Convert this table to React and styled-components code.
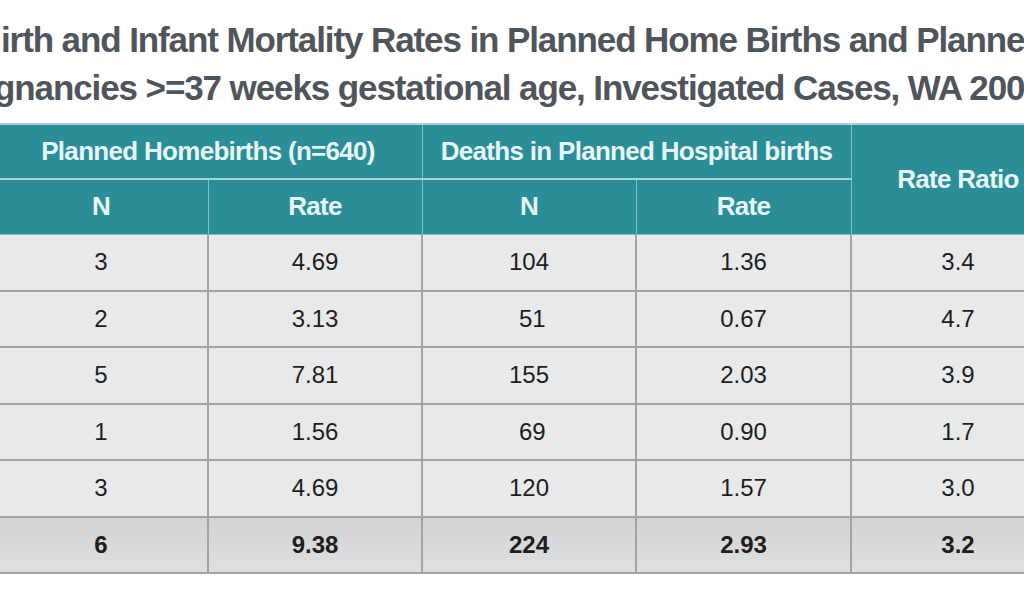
import React from "react";
import styled, { createGlobalStyle } from "styled-components";

const Global = createGlobalStyle`
  html, body { margin: 0; padding: 0; background: #ffffff; }
  body { width: 1024px; height: 600px; overflow: hidden; }
`;

const Page = styled.div`
  width: 1024px;
  height: 600px;
  overflow: hidden;
  background: #fff;
  display: flex;
  flex-direction: column;
`;

const Title = styled.div`
  padding-top: 16px;
  height: 123px;
  box-sizing: border-box;
  font-family: "Liberation Sans", Arial, sans-serif;
  font-weight: 700;
  font-size: 35px;
  letter-spacing: -1.1px;
  line-height: 48px;
  color: #50555b;
  white-space: nowrap;
  flex: none;
`;

const TitleLine = styled.div`
  margin-left: ${(p) => p.$offset || 0}px;
`;

const Table = styled.table`
  border-collapse: collapse;
  table-layout: fixed;
  width: 1071px;
  margin-left: -7px;
  flex: none;
`;

const HeadCell = styled.th`
  background: #2b8d98;
  color: #e6f5f5;
  font-family: "Liberation Sans", Arial, sans-serif;
  font-weight: 700;
  font-size: 26px;
  letter-spacing: -0.7px;
  height: 55px;
  padding: 0;
  text-align: center;
  vertical-align: middle;
  border: 1px solid #80bdc4;
  border-top: 2px solid #a4d2d7;
  box-sizing: border-box;
`;

const Cell = styled.td`
  background: ${(p) => (p.$total ? "linear-gradient(#d1d3d5, #dddfe1)" : "#e8e9eb")};
  color: #1e1e1e;
  font-family: "Liberation Sans", Arial, sans-serif;
  font-weight: ${(p) => (p.$total ? 700 : 400)};
  font-size: 24px;
  height: 56.5px;
  padding: 0;
  text-align: center;
  vertical-align: middle;
  white-space: pre;
  border: 2px solid #a2a3a5;
  border-top: ${(p) => (p.$first ? "none" : "2px solid #a2a3a5")};
  box-sizing: border-box;
`;

const rows = [
  ["3", "4.69", "104", "1.36", "3.4"],
  ["2", "3.13", " 51", "0.67", "4.7"],
  ["5", "7.81", "155", "2.03", "3.9"],
  ["1", "1.56", " 69", "0.90", "1.7"],
  ["3", "4.69", "120", "1.57", "3.0"],
  ["6", "9.38", "224", "2.93", "3.2"],
];

export default function App() {
  return (
    <Page>
      <Global />
      <Title>
        <TitleLine $offset={1}>irth and Infant Mortality Rates in Planned Home Births and Planned</TitleLine>
        <TitleLine $offset={-6}>gnancies &gt;=37 weeks gestational age, Investigated Cases, WA 2005</TitleLine>
      </Title>
      <Table>
        <colgroup>
          <col style={{ width: 214 }} />
          <col style={{ width: 214 }} />
          <col style={{ width: 214 }} />
          <col style={{ width: 215 }} />
          <col style={{ width: 214 }} />
        </colgroup>
        <thead>
          <tr>
            <HeadCell colSpan={2}>Planned Homebirths (n=640)</HeadCell>
            <HeadCell colSpan={2}>Deaths in Planned Hospital births</HeadCell>
            <HeadCell rowSpan={2}>Rate Ratio</HeadCell>
          </tr>
          <tr>
            <HeadCell>N</HeadCell>
            <HeadCell>Rate</HeadCell>
            <HeadCell>N</HeadCell>
            <HeadCell>Rate</HeadCell>
          </tr>
        </thead>
        <tbody>
          {rows.map((r, i) => (
            <tr key={i}>
              {r.map((v, j) => (
                <Cell key={j} $total={i === rows.length - 1} $first={i === 0}>
                  {v}
                </Cell>
              ))}
            </tr>
          ))}
        </tbody>
      </Table>
    </Page>
  );
}
